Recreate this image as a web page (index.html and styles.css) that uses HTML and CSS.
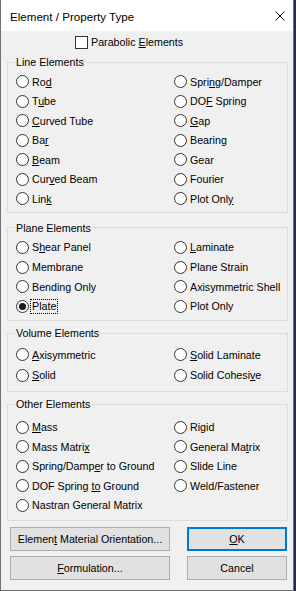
FILE: index.html
```html
<!DOCTYPE html>
<html lang="en">
<head>
    <meta charset="UTF-8">
    <title>Element / Property Type</title>
    <link rel="stylesheet" href="styles.css">
</head>
<body>
    <div class="window">
        <div class="titlebar">
            <span class="title">Element / Property Type</span>
            <svg class="close" width="10" height="10" viewBox="0 0 10 10">
                <path d="M0.5 0.5L9.5 9.5M9.5 0.5L0.5 9.5" stroke="#000" stroke-width="1" fill="none"/>
            </svg>
        </div>
        <div class="dialog">
            <label class="check"><span class="box"></span><span>Parabolic <u>E</u>lements</span></label>

            <fieldset class="group group-line">
                <legend>Line Elements</legend>
                <div class="opts">
                    <div class="opt"><span class="radio"></span><span>Ro<u>d</u></span></div>
                    <div class="opt"><span class="radio"></span><span>Spri<u>ng</u>/Damper</span></div>
                    <div class="opt"><span class="radio"></span><span>T<u>u</u>be</span></div>
                    <div class="opt"><span class="radio"></span><span>DO<u>F</u> Spring</span></div>
                    <div class="opt"><span class="radio"></span><span><u>C</u>urved Tube</span></div>
                    <div class="opt"><span class="radio"></span><span><u>G</u>ap</span></div>
                    <div class="opt"><span class="radio"></span><span>Ba<u>r</u></span></div>
                    <div class="opt"><span class="radio"></span><span>Bearing</span></div>
                    <div class="opt"><span class="radio"></span><span><u>B</u>eam</span></div>
                    <div class="opt"><span class="radio"></span><span>Gear</span></div>
                    <div class="opt"><span class="radio"></span><span>Cur<u>v</u>ed Beam</span></div>
                    <div class="opt"><span class="radio"></span><span>Fourier</span></div>
                    <div class="opt"><span class="radio"></span><span>Lin<u>k</u></span></div>
                    <div class="opt"><span class="radio"></span><span>Plot Onl<u>y</u></span></div>
                </div>
            </fieldset>

            <fieldset class="group group-plane">
                <legend>Plane Elements</legend>
                <div class="opts">
                    <div class="opt"><span class="radio"></span><span>S<u>h</u>ear Panel</span></div>
                    <div class="opt"><span class="radio"></span><span><u>L</u>aminate</span></div>
                    <div class="opt"><span class="radio"></span><span>Membrane</span></div>
                    <div class="opt"><span class="radio"></span><span>Plane Strain</span></div>
                    <div class="opt"><span class="radio"></span><span>Bending Only</span></div>
                    <div class="opt"><span class="radio"></span><span>Axisymmetric Shell</span></div>
                    <div class="opt"><span class="radio on"></span><span class="focus">Plate</span></div>
                    <div class="opt"><span class="radio"></span><span>Plot Only</span></div>
                </div>
            </fieldset>

            <fieldset class="group group-volume">
                <legend>Volume Elements</legend>
                <div class="opts">
                    <div class="opt"><span class="radio"></span><span><u>A</u>xisymmetric</span></div>
                    <div class="opt"><span class="radio"></span><span><u>S</u>olid Laminate</span></div>
                    <div class="opt"><span class="radio"></span><span><u>S</u>olid</span></div>
                    <div class="opt"><span class="radio"></span><span>Solid Cohesi<u>v</u>e</span></div>
                </div>
            </fieldset>

            <fieldset class="group group-other">
                <legend>Other Elements</legend>
                <div class="opts">
                    <div class="opt"><span class="radio"></span><span><u>M</u>ass</span></div>
                    <div class="opt"><span class="radio"></span><span>Rigid</span></div>
                    <div class="opt"><span class="radio"></span><span>Mass Matri<u>x</u></span></div>
                    <div class="opt"><span class="radio"></span><span>General Ma<u>t</u>rix</span></div>
                    <div class="opt"><span class="radio"></span><span>Spring/Damp<u>e</u>r to Ground</span></div>
                    <div class="opt"><span class="radio"></span><span>Slide Line</span></div>
                    <div class="opt"><span class="radio"></span><span>DOF Spring <u>to</u> Ground</span></div>
                    <div class="opt"><span class="radio"></span><span>Weld/Fastener</span></div>
                    <div class="opt"><span class="radio"></span><span>Nastran General Matrix</span></div>
                </div>
            </fieldset>

            <div class="buttons">
                <button>Elemen<u>t</u> Material Orientation...</button>
                <button class="default"><u>O</u>K</button>
                <button><u>F</u>ormulation...</button>
                <button>Cancel</button>
            </div>
        </div>
    </div>
</body>
</html>
```

FILE: styles.css
```css
body {
    margin: 0;
    background: #2a2946;
    font-family: 'Liberation Sans', Arial, sans-serif;
    font-size: 10.7px;
    color: #000;
}
.window {
    width: 294px;
    height: 591px;
    box-sizing: border-box;
    background: #f0f0f0;
    border: 1px solid #6f6f6f;
    border-top: none;
}
.titlebar {
    height: 31px;
    background: #fff;
    display: flex;
    align-items: center;
    justify-content: space-between;
    padding: 0 8px 0 9px;
}
.title {
    font-size: 11.6px;
    margin-top: 1px;
}
.close {
    display: block;
    margin-top: 1px;
}
.dialog {
    padding: 0 5px 0 6px;
}
u {
    text-decoration: underline;
    text-underline-offset: 1px;
}
.check {
    display: flex;
    align-items: center;
    height: 13px;
    margin: 5px 0 0 68px;
    line-height: 13px;
}
.box {
    width: 13px;
    height: 13px;
    box-sizing: border-box;
    border: 1px solid #333;
    background: #fff;
    margin-right: 3px;
}
.group {
    width: 281px;
    box-sizing: border-box;
    margin: 0;
    border: 1px solid #dcdcdc;
    padding: 4px 0 3px 8px;
    min-width: 0;
}
.group legend {
    padding: 0 1px;
    margin-left: -1px;
    line-height: 12px;
}
.group-line { margin-top: 7px; }
.group-plane { margin-top: 9px; padding-bottom: 4px; }
.group-volume { margin-top: 6px; padding-top: 5px; padding-bottom: 6px; }
.group-other { margin-top: 6px; padding-top: 7px; padding-bottom: 5px; }
.opts {
    display: grid;
    grid-template-columns: 158px 1fr;
    grid-auto-rows: 19.5px;
}
.group-plane .opts { grid-auto-rows: 19.7px; }
.group-volume .opts { grid-auto-rows: 20.5px; }
.opt {
    display: flex;
    align-items: center;
    white-space: nowrap;
}
.radio {
    width: 13px;
    height: 13px;
    box-sizing: border-box;
    border: 1px solid #333;
    border-radius: 50%;
    background: #fff;
    margin-right: 3px;
    flex-shrink: 0;
    display: flex;
    align-items: center;
    justify-content: center;
}
.radio.on::after {
    content: "";
    width: 7px;
    height: 7px;
    border-radius: 50%;
    background: #1a1a1a;
}
.focus {
    outline: 1px dotted #000;
    outline-offset: 0;
    line-height: 13px;
    margin-left: -1px;
    padding: 0 1px;
}
.buttons {
    display: grid;
    grid-template-columns: 160px 100px;
    grid-auto-rows: 24px;
    column-gap: 17px;
    row-gap: 5px;
    margin: 6px 0 0 3px;
}
.buttons button {
    font: inherit;
    color: #000;
    background: #e1e1e1;
    border: 1px solid #adadad;
    padding: 0;
    margin: 0;
}
.buttons button.default {
    border: 2px solid #0078d7;
}
```
